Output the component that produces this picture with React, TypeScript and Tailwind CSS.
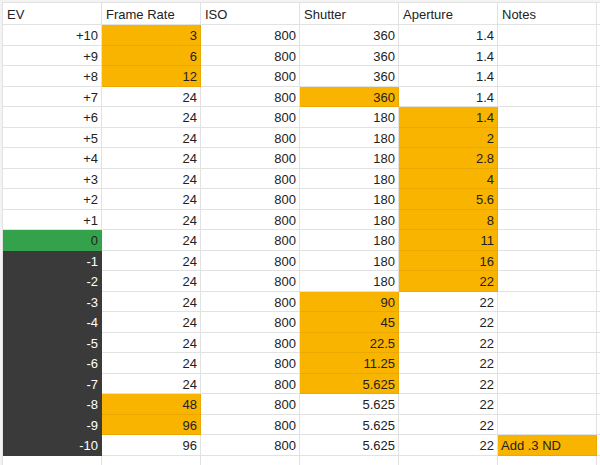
import React from "react";

type Fill = "none" | "orange" | "dark" | "green";

interface Cell {
  text: string;
  fill?: Fill;
  left?: boolean;
}

const headers = ["EV", "Frame Rate", "ISO", "Shutter", "Aperture", "Notes"];

const ev = ["+10", "+9", "+8", "+7", "+6", "+5", "+4", "+3", "+2", "+1", "0", "-1", "-2", "-3", "-4", "-5", "-6", "-7", "-8", "-9", "-10"];
const frameRate = ["3", "6", "12", "24", "24", "24", "24", "24", "24", "24", "24", "24", "24", "24", "24", "24", "24", "24", "48", "96", "96"];
const shutter = ["360", "360", "360", "360", "180", "180", "180", "180", "180", "180", "180", "180", "180", "90", "45", "22.5", "11.25", "5.625", "5.625", "5.625", "5.625"];
const aperture = ["1.4", "1.4", "1.4", "1.4", "1.4", "2", "2.8", "4", "5.6", "8", "11", "16", "22", "22", "22", "22", "22", "22", "22", "22", "22"];

const rows: Cell[][] = ev.map((e, i) => [
  { text: e, fill: i === 10 ? "green" : i > 10 ? "dark" : "none" },
  { text: frameRate[i], fill: i < 3 || i === 18 || i === 19 ? "orange" : "none" },
  { text: "800" },
  { text: shutter[i], fill: i === 3 || (i >= 13 && i <= 17) ? "orange" : "none" },
  { text: aperture[i], fill: i >= 4 && i <= 12 ? "orange" : "none" },
  i === 20 ? { text: "Add .3 ND", fill: "orange", left: true } : { text: "", left: true },
]);

const fillClass: Record<Fill, string> = {
  none: "bg-white border-[#e2e2e2] text-[#222]",
  orange: "bg-[#f9b400] border-[#eaa800] text-[#222]",
  dark: "bg-[#3a3a3a] border-[#3a3a3a] text-white",
  green: "bg-[#33a24b] border-[#33a24b] text-[#222]",
};

function GridCell({ cell, height }: { cell: Cell; height: string }) {
  return (
    <div
      className={`w-[99px] shrink-0 border-r border-b flex items-center px-[3px] pt-[1px] ${height} ${
        cell.left ? "justify-start" : "justify-end"
      } ${fillClass[cell.fill ?? "none"]}`}>
      {cell.text}
    </div>
  );
}

export default function App() {
  return (
    <div
      className="w-[600px] h-[465px] overflow-hidden bg-[#f3f3f3] pt-[2px] pl-[2px] text-[13px] leading-none"
      style={{ fontFamily: '"Liberation Sans", Arial, sans-serif' }}>
      <div className="border-l border-t border-[#e2e2e2] bg-white w-[700px]">
        {/* header row */}
        <div className="flex">
          {headers.map((h) => (
            <div
              key={h}
              className="w-[99px] h-[22px] shrink-0 border-r border-b border-[#e2e2e2] flex items-center px-[4px] pt-[1px] text-[#222]">
              {h}
            </div>
          ))}
          <div className="w-[99px] h-[22px] shrink-0 border-r border-b border-[#e2e2e2]" />
        </div>
        {rows.map((row, i) => {
          const height = i % 2 === 0 ? "h-[21px]" : "h-[20px]";
          return (
            <div key={i} className="flex">
              {row.map((cell, j) => (
                <GridCell key={j} cell={cell} height={height} />
              ))}
              <GridCell cell={{ text: "" }} height={height} />
            </div>
          );
        })}
        <div className="flex">
          {Array.from({ length: 7 }).map((_, j) => (
            <div key={j} className="w-[99px] h-[21px] shrink-0 border-r border-b border-[#e2e2e2]" />
          ))}
        </div>
      </div>
    </div>
  );
}
